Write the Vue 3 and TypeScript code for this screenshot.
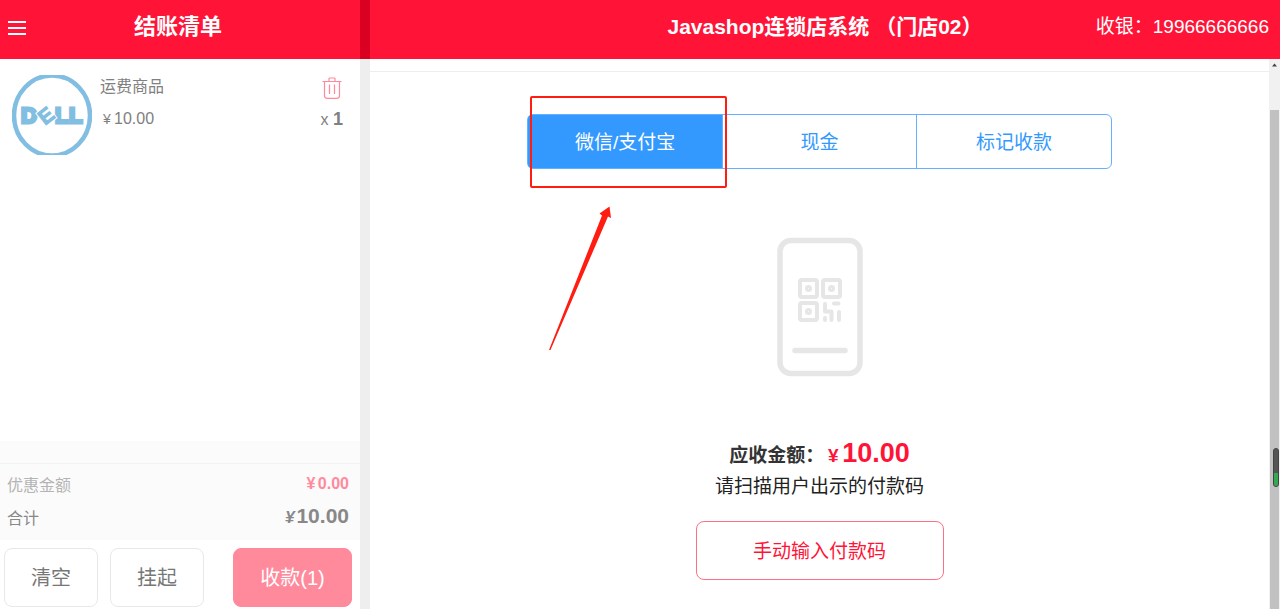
<script setup lang="ts">
import { ref } from 'vue'

interface CartItem {
  id: number
  name: string
  price: string
  count: number
}

const items: CartItem[] = [{ id: 1, name: '运费商品', price: '10.00', count: 1 }]
const methods: string[] = ['微信/支付宝', '现金', '标记收款']
const active = ref(0)
</script>

<template>
  <div class="pos" lang="zh-CN">
    <aside class="cart">
      <header class="bar cart-bar">
        <button class="menu" type="button" aria-label="菜单">
          <svg width="18" height="16" viewBox="0 0 18 16">
            <path d="M0 2H18M0 8H18M0 14H18" stroke="#fff" stroke-width="2" />
          </svg>
        </button>
        <h1 class="title">结账清单</h1>
      </header>

      <ul class="items">
        <li v-for="item in items" :key="item.id" class="item">
          <svg class="thumb" width="80" height="80" viewBox="0 0 80 80" role="img">
            <ellipse cx="40" cy="40.500" rx="38" ry="40" fill="none" stroke="#82bee2" stroke-width="4.500" />
            <g class="brand">
              <text x="9" y="48">D</text>
              <text x="43" y="48">L</text>
              <text x="57" y="48">L</text>
              <text y="7.500" transform="translate(34 40.500) rotate(-38)" class="tilt-gap">E</text>
              <text y="7.500" transform="translate(34 40.500) rotate(-38)" class="tilt">E</text>
            </g>
          </svg>
          <div class="info">
            <span class="name">{{ item.name }}</span>
            <span class="price"><span class="yen">¥</span>{{ item.price }}</span>
          </div>
          <div class="side">
            <button class="remove" type="button" aria-label="删除">
              <svg width="20" height="22" viewBox="0 0 20 22" fill="none" stroke="#ff8a9c" stroke-width="1.2">
                <path d="M0.500 4.500H19.500M7 4V1.600Q7 1 7.600 1H12.400Q13 1 13 1.600V4M2.500 4.500V18.500Q2.500 21.300 5.300 21.300H14.700Q17.500 21.300 17.500 18.500V4.500M7.500 7.500V17M12.500 7.500V17" />
              </svg>
            </button>
            <span class="count">x <b>{{ item.count }}</b></span>
          </div>
        </li>
      </ul>

      <section class="summary">
        <div class="row discount">
          <span>优惠金额</span>
          <b><span class="yen">¥</span>0.00</b>
        </div>
        <div class="row total">
          <span>合计</span>
          <b><i>¥</i>10.00</b>
        </div>
      </section>

      <footer class="actions">
        <button class="btn" type="button">清空</button>
        <button class="btn" type="button">挂起</button>
        <button class="btn pay" type="button">收款(1)</button>
      </footer>
    </aside>

    <div class="gutter"><div class="gutter-top"></div></div>

    <main class="main">
      <header class="bar main-bar">
        <h2 class="title store">Javashop连锁店系统 （门店02）</h2>
        <span class="cashier">收银：19966666666</span>
      </header>

      <div class="body">
        <div class="content">
          <div class="rule"></div>
          <div class="tabs">
            <button
              v-for="(m, i) in methods"
              :key="m"
              type="button"
              class="tab"
              :class="{ on: i === active }"
              @click="active = i"
            >{{ m }}</button>
            <svg class="mark" width="200" height="258" viewBox="0 0 200 258">
              <rect x="2" y="2" width="195" height="90" rx="1" fill="none" stroke="#ff1c10" stroke-width="2" />
              <path d="M20 255L73 120.500L70.500 118.500L80.500 111.500L82 123L79 121.500L21.500 255Z" fill="#ff1c10" />
            </svg>
          </div>

          <svg class="phone" width="86" height="140" viewBox="0 0 86 140" fill="none" stroke="#e6e6e6" stroke-linecap="round" stroke-linejoin="round">
            <rect x="3" y="3.500" width="80" height="133" rx="11" stroke-width="5.500" />
            <path d="M18 113.500H68" stroke-width="5.500" />
            <g stroke-width="4">
              <rect x="23" y="43" width="17" height="17" rx="2" />
              <rect x="46" y="43" width="17" height="17" rx="2" />
              <rect x="23" y="66" width="17" height="17" rx="2" />
              <path d="M48 67V74.500H54.500V83M48 81V83M57 66.500H61.500M62 75V83" />
            </g>
            <g stroke-width="3">
              <circle cx="31.500" cy="51.500" r="2" />
              <circle cx="54.500" cy="51.500" r="2" />
              <circle cx="31.500" cy="74.500" r="2" />
            </g>
          </svg>

          <p class="due">应收金额：<span class="red"><span class="yen">¥</span><span class="num">10.00</span></span></p>
          <p class="hint">请扫描用户出示的付款码</p>
          <button class="manual" type="button">手动输入付款码</button>
        </div>

        <div class="scroll">
          <svg class="up" width="11" height="11" viewBox="0 0 11 11"><path d="M3 7.500L5.500 4.500L8 7.500Z" fill="#444" /></svg>
          <div class="grip"></div>
          <div class="meter"><div class="meter-fill"></div></div>
        </div>
      </div>
    </main>
  </div>
</template>

<style>
body {
  margin: 0;
}
</style>

<style scoped>
.pos {
  display: grid;
  grid-template-columns: 360px 10px minmax(0, 1fr);
  min-height: 100vh;
  background: #fff;
  color: #222;
  font-family: "Liberation Sans", "Noto Sans CJK SC", sans-serif;
  font-size: 16px;
}
.pos * {
  box-sizing: border-box;
}
button {
  font-family: inherit;
  padding: 0 0 2px;
  border: 0;
  background: none;
  cursor: pointer;
}
.bar {
  display: flex;
  align-items: center;
  position: relative;
  height: 59px;
  padding-bottom: 6px;
  background: #ff1437;
  color: #fff;
}
.title {
  flex: 1;
  margin: 0;
  font-size: 22px;
  line-height: 32px;
  text-align: center;
  white-space: pre;
}
.store {
  font-size: 21px;
}
.menu {
  display: flex;
  width: 18px;
  margin: 4px 0 0 8px;
}
.cart-bar {
  padding-right: 30px;
}
.cart {
  display: flex;
  flex-direction: column;
}
.items {
  flex: 1;
  margin: 0;
  padding: 16px 17px 0 12px;
  list-style: none;
  color: #808080;
}
.item {
  display: flex;
  gap: 8px;
}
.thumb {
  flex: none;
}
.brand {
  fill: #82bee2;
  stroke: #82bee2;
  stroke-width: 3;
  font-family: "Liberation Sans", sans-serif;
  font-weight: bold;
  font-size: 22px;
}
.tilt,
.tilt-gap {
  font-size: 21px;
  text-anchor: middle;
  stroke-width: 1;
}
.tilt-gap {
  stroke: #fff;
  stroke-width: 3;
}
.info {
  display: flex;
  flex: 1;
  flex-direction: column;
  line-height: 24px;
  gap: 8px;
}
.yen {
  display: inline-block;
  width: 14px;
  font-size: 14px;
  text-align: center;
}
.side {
  display: flex;
  flex-direction: column;
  align-items: flex-end;
  gap: 6px;
}
.remove {
  display: flex;
  margin: 2px 1px 0 0;
}
.count {
  line-height: 24px;
}
.count b {
  font-size: 18px;
}
.summary {
  padding: 22px 11px 10px 7px;
  background: #fbfbfb linear-gradient(#f2f2f2, #f2f2f2) 0 22px / 100% 1px no-repeat;
}
.row {
  display: flex;
  justify-content: space-between;
  align-items: center;
  color: #888;
}
.discount {
  height: 41px;
  color: #b4b4b4;
}
.discount b {
  color: #ff8a9c;
}
.discount .yen {
  font-size: 16px;
}
.total {
  height: 26px;
}
.total b {
  font-size: 21px;
  line-height: 24px;
}
.total i {
  margin-right: 2px;
  font-size: 17px;
}
.actions {
  display: flex;
  gap: 12px;
  padding: 8px 8px 2px 4px;
}
.btn {
  width: 94px;
  height: 59px;
  border: 1px solid #e8e8e8;
  border-radius: 8px;
  background: #fff;
  color: #777;
  font-size: 20px;
}
.pay {
  width: 119px;
  margin-left: auto;
  border-color: #ff8a9c;
  background: #ff8a9c;
  color: #fff;
}
.gutter {
  background: #eee;
}
.gutter-top {
  height: 59px;
  background: #d90022;
}
.main {
  display: flex;
  flex-direction: column;
  min-width: 0;
}
.cashier {
  position: absolute;
  right: 11px;
  font-size: 19px;
  line-height: 32px;
}
.body {
  display: flex;
  flex: 1;
}
.content {
  display: flex;
  flex: 1;
  flex-direction: column;
  align-items: center;
  padding-top: 12px;
}
.rule {
  align-self: stretch;
  height: 1px;
  background: #eee;
}
.tabs {
  display: flex;
  position: relative;
  width: 65%;
  margin: 42px 0 68px;
  border: 1px solid #66b1ff;
  border-radius: 6px;
}
.tab {
  flex: 1;
  height: 53px;
  color: #3399ff;
  font-size: 19px;
}
.tab + .tab {
  border-left: 1px solid #66b1ff;
}
.tab.on {
  border-radius: 4px 0 0 4px;
  background: #3399ff;
  color: #fff;
}
.mark {
  position: absolute;
  top: -20px;
  left: 1px;
  pointer-events: none;
}
.due {
  height: 36px;
  margin: 58px 0 0;
  color: #333;
  font-size: 19px;
  font-weight: bold;
  line-height: 36px;
}
.red {
  color: #ff1437;
}
.due .yen {
  width: 18px;
  font-size: 19px;
}
.num {
  font-size: 27px;
}
.hint {
  margin: 0 0 18px;
  font-size: 19px;
  line-height: 32px;
}
.manual {
  width: 248px;
  height: 59px;
  border: 1px solid #ff6f86;
  border-radius: 8px;
  color: #ff1437;
  font-size: 19px;
}
.scroll {
  display: flex;
  position: relative;
  flex-direction: column;
  width: 11px;
  background: #f1f1f1;
}
.up {
  margin-bottom: 40px;
}
.grip {
  flex: 1;
  margin: 0 1px;
  background: #c1c1c1;
}
.meter {
  position: absolute;
  right: 1px;
  bottom: 122px;
  width: 6px;
  height: 39px;
  overflow: hidden;
  border: 1px solid #444;
  border-radius: 3px;
  background: #555;
}
.meter-fill {
  height: 13px;
  margin-top: 24px;
  background: #34a853;
}
</style>
